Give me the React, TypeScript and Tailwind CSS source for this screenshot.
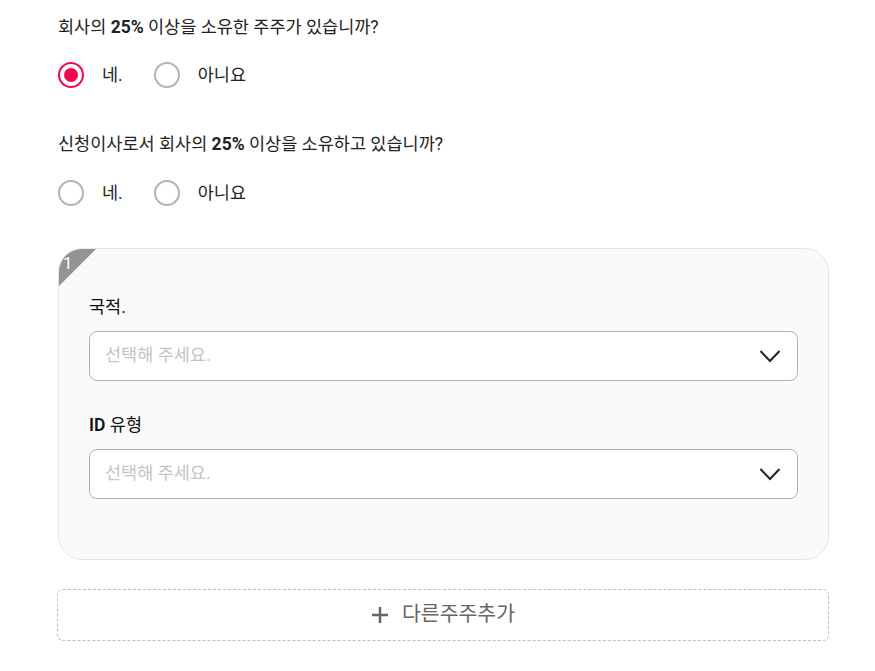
import { useState } from "react";

const Radio = ({ checked, label, onClick }: { checked: boolean; label: string; onClick: () => void }) => (
  <button className="flex items-center gap-[18px] mr-[31px]" onClick={onClick}>
    <span
      className={
        "flex items-center justify-center w-[26px] h-[26px] rounded-full border-2 " +
        (checked ? "border-[#f5074f]" : "border-[#b3b3b3]")
      }
    >
      {checked && <span className="w-[14px] h-[14px] rounded-full bg-[#f5074f]" />}
    </span>
    <span className="text-[17.5px] text-[#222]">{label}</span>
  </button>
);

const Select = ({ children }: { children: React.ReactNode }) => (
  <div>
    <p className="text-[17.5px] leading-[26px] text-[#111] mb-[11px]">{children}</p>
    <div className="flex items-center justify-between h-[50px] rounded-[8px] border border-[#b0b0b0] bg-white pl-[15px] pr-[16px]">
      <span className="text-[17.5px] text-[#c4c4c4]">선택해 주세요.</span>
      <svg width="22" height="14" viewBox="0 0 22 14" fill="none">
        <path d="M1.5 2 L11 12 L20.5 2" stroke="#222" strokeWidth="2" />
      </svg>
    </div>
  </div>
);

const App = () => {
  const [q1, setQ1] = useState<string | null>("yes");
  const [q2, setQ2] = useState<string | null>(null);

  return (
    <div className="w-[875px] bg-white pl-[58px] pr-[46px] pt-[14px] pb-[30px] font-['Roboto','Noto_Sans_CJK_KR',sans-serif]">
      <p className="text-[17.5px] text-[#222] leading-[26px]">
        회사의 <b>25%</b> 이상을 소유한 주주가 있습니까?
      </p>
      <div className="flex mt-[22px]">
        <Radio checked={q1 === "yes"} label="네." onClick={() => setQ1("yes")} />
        <Radio checked={q1 === "no"} label="아니요" onClick={() => setQ1("no")} />
      </div>

      <p className="text-[17.5px] text-[#222] leading-[26px] mt-[43px]">
        신청이사로서 회사의 <b>25%</b> 이상을 소유하고 있습니까?
      </p>
      <div className="flex mt-[23px]">
        <Radio checked={q2 === "yes"} label="네." onClick={() => setQ2("yes")} />
        <Radio checked={q2 === "no"} label="아니요" onClick={() => setQ2("no")} />
      </div>

      <div className="relative mt-[41px] rounded-[24px] border border-[#e6e6e6] bg-[#fafafa] pl-[30px] pr-[30px] pt-[45px] pb-[60px] overflow-hidden">
        <svg className="absolute left-0 top-0" width="37" height="37" viewBox="0 0 37 37">
          <polygon points="0,0 37,0 0,37" fill="#939393" />
        </svg>
        <span className="absolute z-10 left-[4px] top-[4px] text-[17px] leading-[20px] text-white">1</span>
        <div className="flex flex-col gap-[31px]">
          <Select>국적.</Select>
          <Select>
            <span className="font-semibold">ID</span> 유형
          </Select>
        </div>
      </div>

      <button className="flex items-center justify-center gap-[13px] w-[772px] -ml-[1px] mt-[29px] h-[52px] rounded-[6px] border border-dashed border-[#bdbdbd] text-[20.5px] text-[#666]">
        <svg width="18" height="18" viewBox="0 0 18 18">
          <path d="M9 1 V17 M1 9 H17" stroke="#666" strokeWidth="2.5" />
        </svg>
        다른주주추가
      </button>
    </div>
  );
};

export default App;
